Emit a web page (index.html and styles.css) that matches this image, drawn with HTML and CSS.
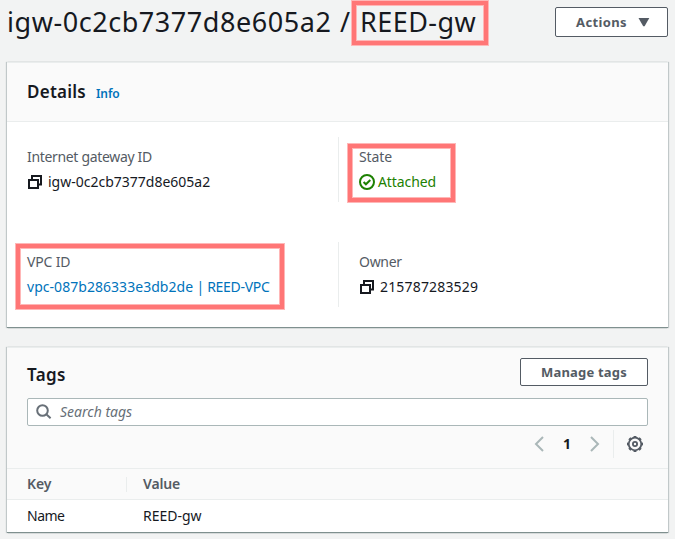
FILE: index.html
```html
<!DOCTYPE html>
<html lang="en">
<head>
<meta charset="utf-8">
<title>Internet gateway</title>
<link rel="stylesheet" href="styles.css">
</head>
<body>
<header class="page-header">
  <h1 class="title"><span class="title-id">igw-0c2cb7377d8e605a2</span><span class="title-sep">/</span><span class="title-name">REED-gw</span></h1>
  <button class="btn btn-actions"><span>Actions</span><svg width="12" height="9" viewBox="0 0 12 9"><path d="M.5 0h10.8L6.6 8.2H5.2z" fill="#545b64"/></svg></button>
</header>

<section class="card details">
  <div class="details-head"><h2 class="h2-details">Details</h2><a class="info">Info</a></div>
  <div class="details-grid">
    <div class="field">
      <div class="label l-gateway">Internet gateway ID</div>
      <div class="value"><svg class="copy" width="14" height="14" viewBox="0 0 14 14"><path d="M1 5h9v8H1zM4 4V1h9v8.500h-3" fill="none" stroke="#16191f" stroke-width="2"/></svg><span class="v-gateway">igw-0c2cb7377d8e605a2</span></div>
    </div>
    <div class="field divided">
      <div class="label l-state">State</div>
      <div class="value ok"><svg class="check" width="16" height="16" viewBox="0 0 16 16"><circle cx="8" cy="8" r="7" fill="none" stroke="#1d8102" stroke-width="2"/><path d="M4.600 8l2.300 2.300L11.300 6" fill="none" stroke="#1d8102" stroke-width="2"/></svg><span class="v-attached">Attached</span></div>
    </div>
    <div class="field">
      <div class="label l-vpc">VPC ID</div>
      <div class="value"><a class="v-vpc"><span class="v-vpc-id">vpc-087b286333e3db2de</span> | REED-VPC</a></div>
    </div>
    <div class="field divided">
      <div class="label l-owner">Owner</div>
      <div class="value"><svg class="copy" width="14" height="14" viewBox="0 0 14 14"><path d="M1 5h9v8H1zM4 4V1h9v8.500h-3" fill="none" stroke="#16191f" stroke-width="2"/></svg><span class="v-owner">215787283529</span></div>
    </div>
  </div>
</section>

<section class="card tags">
  <div class="tags-head">
    <div class="tags-title"><h2 class="h2-tags">Tags</h2><button class="btn btn-manage"><span>Manage tags</span></button></div>
    <div class="search"><svg width="16" height="16" viewBox="0 0 16 16"><circle cx="6.500" cy="6.500" r="5.300" fill="none" stroke="#687078" stroke-width="2"/><path d="M10.300 10.300l4.300 4" stroke="#687078" stroke-width="2"/></svg><span class="placeholder">Search tags</span></div>
    <div class="pager">
      <svg class="prev" width="10" height="16" viewBox="0 0 10 16"><path d="M9 1L2 8l7 7" fill="none" stroke="#aab7b8" stroke-width="2"/></svg>
      <b class="page-no">1</b>
      <svg class="next" width="10" height="16" viewBox="0 0 10 16"><path d="M1 1l7 7-7 7" fill="none" stroke="#aab7b8" stroke-width="2"/></svg>
      <span class="pager-line"></span>
      <svg class="gear" width="16" height="16" viewBox="0 0 16 16" fill="none" stroke="#545b64"><circle cx="8" cy="8" r="6.300" stroke-width="1.800"/><circle cx="8" cy="8" r="7.300" stroke-width="1.500" pathLength="80" stroke-dasharray="5 5" stroke-dashoffset="2.500"/><circle cx="8" cy="8" r="2.100" stroke-width="1.800"/></svg>
    </div>
  </div>
  <div class="row row-head"><div class="cell-key"><span class="t-key">Key</span></div><div class="cell-value"><span class="t-value">Value</span></div></div>
  <div class="row"><div class="cell-key"><span class="t-name">Name</span></div><div class="cell-value"><span class="t-reed">REED-gw</span></div></div>
</section>

<div class="mark mark-name"></div>
<div class="mark mark-state"></div>
<div class="mark mark-vpc"></div>
</body>
</html>
```
FILE: styles.css
```css
* { box-sizing: border-box; }
body {
  margin: 0;
  width: 675px;
  height: 539px;
  overflow: hidden;
  position: relative;
  background: #f2f3f3;
  color: #16191f;
  font: 14px/22px "Noto Sans", "Open Sans", sans-serif;
}
h1, h2 { margin: 0; }
svg { display: block; flex: none; }
span, a, b, h1, h2, .label { white-space: nowrap; }

.page-header { display: flex; justify-content: space-between; height: 62px; padding: 0 7px 0 7px; }
.title { display: flex; font-size: 27px; line-height: 36px; font-weight: 400; padding-top: 4px; }
.title-id { width: 333px; letter-spacing: .55px; }
.title-sep { width: 20px; }
.title-name { letter-spacing: .45px; }

.btn {
  display: flex;
  align-items: center;
  justify-content: center;
  padding: 0;
  background: #fff;
  border: 1px solid #545b64;
  border-radius: 2px;
  color: #545b64;
  font: 700 13px/20px "Noto Sans", sans-serif;
  letter-spacing: .35px;
}
.btn-actions { width: 113px; height: 30px; margin-top: 7px; gap: 11px; padding-left: 3px; }
.btn-manage { width: 128px; height: 28px; letter-spacing: .2px; }

.card {
  width: 661px;
  margin-left: 7px;
  background: #fff;
  border-top: 1px solid #eaeded;
  box-shadow: 0 1px 1px -1px rgba(0, 28, 36, .3), 1px 0 1px 0 rgba(0, 28, 36, .2), -1px 0 1px 0 rgba(0, 28, 36, .2);
  border-bottom: 1px solid #7f908f;
}
.details { height: 266px; }
.details-head { display: flex; align-items: baseline; gap: 10px; height: 59px; padding: 17px 20px; background: #fafafa; border-bottom: 1px solid #eaeded; }
h2 { font-size: 17px; line-height: 24px; font-weight: 600; }
.h2-details { letter-spacing: .25px; }
.info { font-size: 12px; font-weight: 600; color: #0073bb; letter-spacing: -.1px; }
.details-grid { display: grid; grid-template-columns: 331px 330px; grid-template-rows: 65px 65px; row-gap: 40px; padding-top: 15px; }
.field { padding: 9px 20px 0; }
.divided { border-left: 1px solid #eaeded; }
.label { color: #545b64; }
.l-gateway { letter-spacing: -.33px; }
.l-vpc { letter-spacing: -.15px; }
.l-state { letter-spacing: -.1px; }
.l-owner { letter-spacing: -.3px; }
.value { display: flex; align-items: center; height: 22px; margin-top: 3px; }
.copy { margin: 0 6px 0 1px; }
.check { margin-right: 3px; }
.ok { color: #1d8102; }
.v-attached { letter-spacing: -.1px; }
.v-vpc { color: #0073bb; letter-spacing: -.3px; }
.v-vpc-id { letter-spacing: .04px; }
.v-owner { letter-spacing: .17px; }

.tags { height: 186px; margin-top: 19px; }
.tags-head { height: 121px; padding: 10px 20px 0; background: #fafafa; border-bottom: 1px solid #eaeded; }
.tags-title { display: flex; justify-content: space-between; height: 40px; }
.h2-tags { padding-top: 5px; letter-spacing: .4px; }
.search { display: flex; align-items: center; gap: 8px; height: 28px; padding-left: 8px; background: #fff; border: 1px solid #aab7b8; border-radius: 2px; }
.placeholder { font-style: italic; color: #687078; }
.pager { display: flex; align-items: center; justify-content: flex-end; height: 28px; margin-top: 4px; padding-right: 5px; }
.page-no { width: 46px; text-align: center; }
.pager-line { width: 1px; height: 28px; margin: 0 13px 0 13px; background: #eaeded; }
.row { display: flex; align-items: center; height: 32px; padding-left: 20px; }
.row-head { height: 31px; background: #fafafa; border-bottom: 1px solid #eaeded; color: #545b64; font-weight: 600; }
.cell-key { width: 100px; }
.t-key, .t-value { letter-spacing: -.15px; }
.t-name { letter-spacing: -.5px; }
.row-head .cell-key { height: 15px; display: flex; align-items: center; border-right: 1px solid #eaeded; }
.cell-value { padding-left: 16px; }

/* highlight frames drawn over the page */
.mark { position: absolute; border: 4px solid #ff7676; box-shadow: 0 0 0 1px #ffb7b7, inset 0 0 0 1px #ffb7b7; }
.mark-name { left: 352px; top: 1px; width: 136px; height: 44px; }
.mark-state { left: 348px; top: 144px; width: 107px; height: 58px; }
.mark-vpc { left: 16px; top: 244px; width: 268px; height: 65px; }
```
